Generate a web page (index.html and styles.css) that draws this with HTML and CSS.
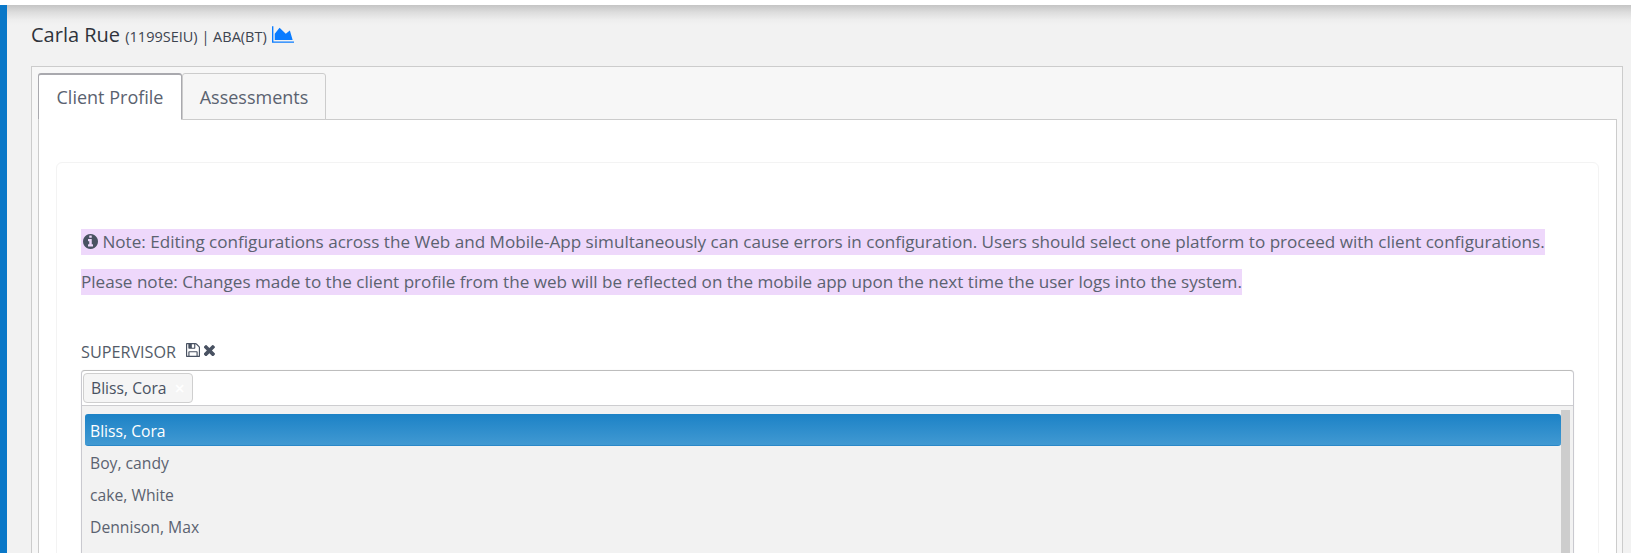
FILE: index.html
```html
<!DOCTYPE html>
<html lang="en">
<head>
<meta charset="utf-8">
<title>Client Profile</title>
<link rel="stylesheet" href="styles.css">
</head>
<body>
<div class="topbar"></div>
<div class="shell">
  <aside class="rail"></aside>
  <main class="main">
    <h1 class="title">Carla Rue <small class="sub">(1199SEIU) | ABA(BT)</small>
      <svg class="chart-icon" viewBox="0 128 2048 1536"><path d="M2048 1536v128h-2048v-1536h128v1408h1920zm-384-1024l256 896h-1664v-576l448-576 576 576z"/></svg>
    </h1>
    <section class="panel">
      <nav class="tabs">
        <div class="tab tab-active">Client Profile</div>
        <div class="tab">Assessments</div>
      </nav>
      <div class="tab-body">
        <div class="card">
          <p class="note"><mark class="hl"><svg class="info-icon" viewBox="128 128 1536 1536"><path d="M1152 1376v-160q0-14-9-23t-23-9h-96v-512q0-14-9-23t-23-9h-320q-14 0-23 9t-9 23v160q0 14 9 23t23 9h96v320h-96q-14 0-23 9t-9 23v160q0 14 9 23t23 9h448q14 0 23-9t9-23zm-128-896v-160q0-14-9-23t-23-9h-192q-14 0-23 9t-9 23v160q0 14 9 23t23 9h192q14 0 23-9t9-23zm640 416q0 209-103 385.500t-279.500 279.500-385.500 103-385.500-103-279.500-279.500-103-385.500 103-385.500 279.500-279.500 385.500-103 385.500 103 279.500 279.500 103 385.500z"/></svg> Note: Editing configurations across the Web and Mobile-App simultaneously can cause errors in configuration. Users should select one platform to proceed with client configurations.</mark></p>
          <p class="note"><mark class="hl">Please note: Changes made to the client profile from the web will be reflected on the mobile app upon the next time the user logs into the system.</mark></p>
          <div class="field-label">
            <span>SUPERVISOR</span>
            <svg class="tool-icon" viewBox="0 128 1536 1536"><path d="M384 1536h768v-384h-768v384zm896 0h128v-896q0-14-10-38.500t-20-34.500l-281-281q-10-10-34-20t-39-10v416q0 40-28 68t-68 28h-576q-40 0-68-28t-28-68v-416h-128v1280h128v-416q0-40 28-68t68-28h832q40 0 68 28t28 68v416zm-384-928v-320q0-13-9.500-22.500t-22.500-9.500h-192q-13 0-22.500 9.500t-9.500 22.500v320q0 13 9.500 22.500t22.500 9.500h192q13 0 22.500-9.500t9.500-22.500zm640 32v928q0 40-28 68t-68 28h-1344q-40 0-68-28t-28-68v-1344q0-40 28-68t68-28h928q40 0 88 20t76 48l280 280q28 28 48 76t20 88z"/></svg>
            <svg class="tool-icon close-icon" viewBox="128 256 1280 1280"><path d="M1298 1322q0 40-28 68l-136 136q-28 28-68 28t-68-28l-294-294-294 294q-28 28-68 28t-68-28l-136-136q-28-28-28-68t28-68l294-294-294-294q-28-28-28-68t28-68l136-136q28-28 68-28t68 28l294 294 294-294q28-28 68-28t68 28l136 136q28 28 28 68t-28 68l-294 294 294 294q28 28 28 68z"/></svg>
          </div>
          <div class="select">
            <div class="choices">
              <span class="chip">Bliss, Cora <span class="chip-x">×</span></span>
            </div>
            <div class="dropdown">
              <ul class="options">
                <li class="option option-active">Bliss, Cora</li>
                <li class="option">Boy, candy</li>
                <li class="option">cake, White</li>
                <li class="option">Dennison, Max</li>
              </ul>
              <div class="scrollbar"></div>
            </div>
          </div>
        </div>
      </div>
    </section>
  </main>
</div>
</body>
</html>
```
FILE: styles.css
```css
* { box-sizing: border-box; }
html, body { height: 553px; overflow: hidden; }
body {
  margin: 0;
  background: #f2f2f2;
  color: #495262;
  font-family: "Open Sans", "Liberation Sans", sans-serif;
  font-size: 16px;
}
.topbar {
  height: 5px;
  background: #fff;
}
.shell {
  display: flex;
  height: 548px;
  overflow: hidden;
  background: linear-gradient(#c4c4c4 0, #dcdcdc 7px, #eeeeee 15px, #f2f2f2 20px);
}
.rail {
  width: 7px;
  flex: none;
  background: #0a78c8;
}
.main {
  flex: 1;
  padding: 0 8px 0 24px;
  min-width: 0;
}
.title {
  margin: 0;
  height: 61px;
  padding-top: 16px;
  font-size: 20px;
  line-height: 27px;
  font-weight: 400;
  color: #2f333b;
}
.sub {
  font-size: 14.5px;
  color: #3d4450;
}
.chart-icon {
  width: 22px;
  height: 17px;
  fill: #0a7cff;
  vertical-align: -1px;
}
.panel {
  height: 600px;
  padding: 6px 5px 0 6px;
  background: #f7f7f7;
  border: 1px solid #cccccc;
}
.tabs {
  display: flex;
  height: 47px;
  position: relative;
  z-index: 1;
  margin-bottom: -1px;
}
.tab {
  width: 144px;
  height: 47px;
  text-align: center;
  line-height: 46px;
  font-size: 18px;
  color: #5a6270;
  background: #f6f6f6;
  border: 1px solid #cccccc;
  border-radius: 3px 3px 0 0;
}
.tab-active {
  background: #fff;
  border-color: #a9a9ae;
  border-top-width: 2px;
  border-bottom: 1px solid #fff;
  line-height: 45px;
}
.tab-body {
  height: 560px;
  padding: 42px 17px 0 17px;
  background: #fff;
  border: 1px solid #cccccc;
}
.card {
  height: 500px;
  padding: 66px 24px 0;
  border: 1px solid #f3f3f3;
  border-radius: 6px;
}
.note {
  margin: 0 0 14px;
  height: 26px;
  font-size: 17.1px;
  line-height: 26px;
  white-space: nowrap;
}
.hl {
  display: inline-block;
  height: 26px;
  background: #eed8fb;
  color: #5b6270;
}
.info-icon {
  width: 15px;
  height: 15px;
  margin-left: 2px;
  fill: #495262;
  vertical-align: -1px;
}
.field-label {
  display: flex;
  align-items: flex-start;
  margin-top: 45px;
  height: 30px;
  font-size: 16.2px;
  line-height: 25px;
  color: #535b68;
}
.tool-icon {
  width: 14px;
  height: 14px;
  margin: 3px 0 0 10px;
  fill: #495262;
}
.close-icon {
  width: 12px;
  height: 12px;
  margin: 4px 0 0 4px;
}
.select {
  background: #fff;
  border: 1px solid #c9c9cf;
  border-top-color: #bdbdbd;
  border-radius: 4px 4px 0 0;
  box-shadow: 0 0 1px rgba(0, 0, 0, .15);
}
.choices {
  height: 35px;
  padding: 2px 1px;
  border-bottom: 1px solid #cdcdd0;
}
.chip {
  display: inline-flex;
  align-items: center;
  height: 30px;
  padding: 0 7px 0 7px;
  gap: 8px;
  font-size: 15.7px;
  color: #495262;
  background: #f5f5f5;
  border: 1px solid #cfcfcf;
  border-radius: 4px;
}
.chip-x {
  color: #fff;
  font-size: 18px;
  font-weight: 600;
}
.dropdown {
  display: flex;
  align-items: flex-start;
  padding: 4px 3px 0;
  height: 200px;
  background: #f2f2f2;
}
.options {
  flex: 1;
  margin: 4px 0 0;
  padding: 0;
  list-style: none;
}
.option {
  height: 32px;
  padding: 2px 5px 0;
  line-height: 30px;
  font-size: 15.7px;
  color: #5b6270;
}
.option-active {
  color: #fff;
  background: linear-gradient(#1c82c6, #4199d2);
  border-radius: 3px;
  border-bottom: 1px solid #2a88c8;
}
.scrollbar {
  width: 9px;
  height: 200px;
  background: #cdcdcd;
}
```
